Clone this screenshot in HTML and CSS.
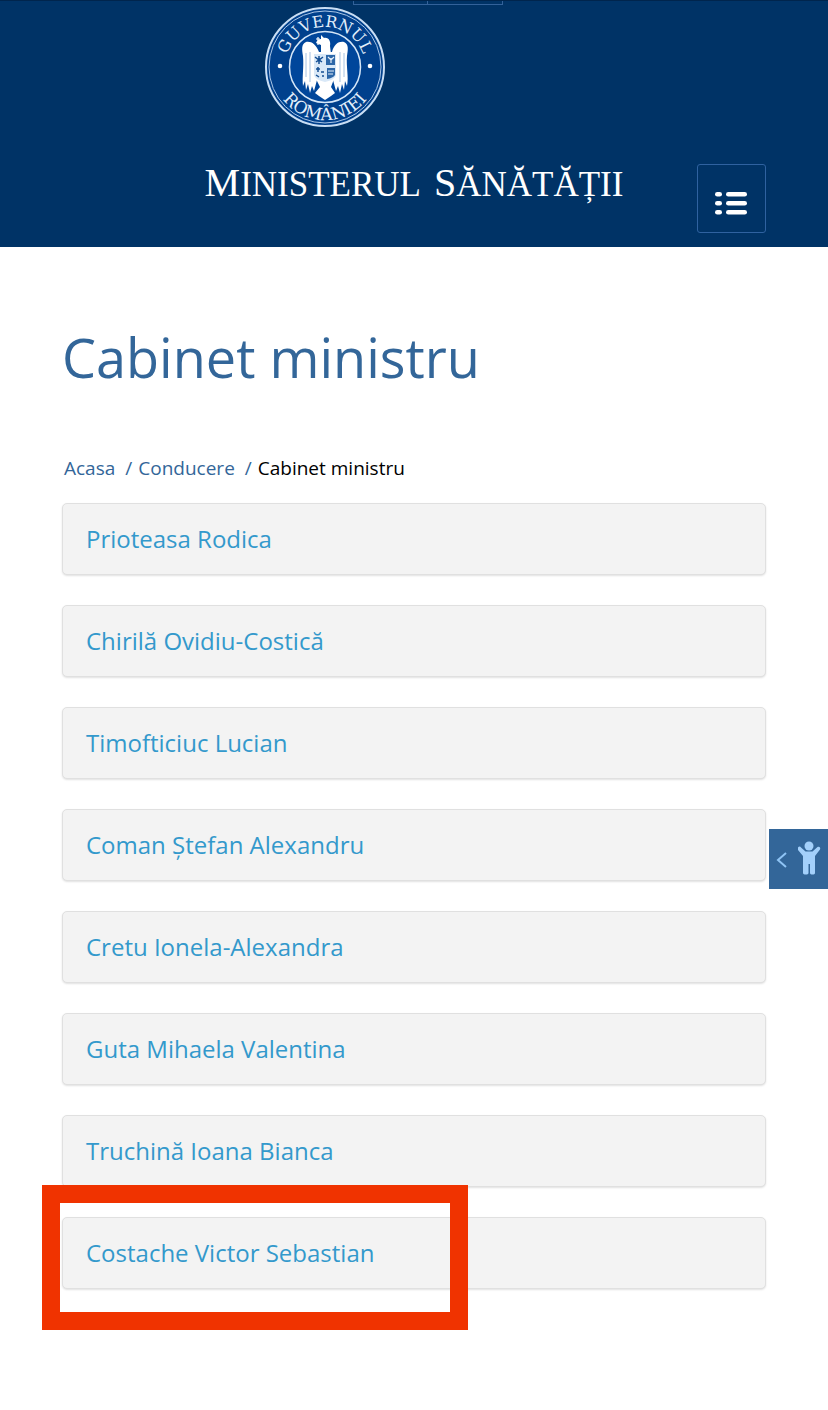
FILE: index.html
```
<!DOCTYPE html>
<html lang="ro">
    <head>
        <meta charset="utf-8">
        <meta name="viewport" content="width=device-width, initial-scale=1">
        <title>Cabinet ministru</title>
        <link rel="stylesheet" href="styles.css">
    </head>
    <body>
        <header class="header">
            <div class="lang-bar">
                <span class="lang-cell"></span>
                <span class="lang-cell"></span>
            </div>
            <div class="header-row">
                <div class="brand">
                    <svg class="logo" viewBox="0 0 120 120" role="img" aria-label="Guvernul României">
                        <defs>
                            <path id="arcTop" d="M20 60 A40 40 0 0 1 100 60"/>
                            <path id="arcBottom" d="M7 60 A53 53 0 0 0 113 60"/>
                        </defs>
                        <circle cx="60" cy="60" r="59" fill="#00408c" stroke="#c9def4" stroke-width="2"/>
                        <circle cx="60" cy="60" r="56" fill="none" stroke="#a9c5e6" stroke-width="1"/>
                        <circle cx="60" cy="60" r="35.5" fill="#00469b" stroke="#d6e7f8" stroke-width="1.5"/>
                        <text class="logo-text"><textPath href="#arcTop" startOffset="50%" text-anchor="middle">GUVERNUL</textPath></text>
                        <text class="logo-text logo-text-low"><textPath href="#arcBottom" startOffset="50%" text-anchor="middle">ROMÂNIEI</textPath></text>
                        <circle cx="15" cy="59" r="2.3" fill="#fff"/>
                        <circle cx="105" cy="59" r="2.3" fill="#fff"/>
                        <!-- eagle -->
                        <g fill="#fff">
                            <path d="M54 45 C51 37 46 34 41 35 C36 37 37 43 38 49 C39 60 37 70 38 79 L40 74 L41 83 L43 77 L45 86 L47 79 L49 84 L52 73 L68 73 L71 84 L73 79 L75 86 L77 77 L79 83 L80 74 L82 79 C84 70 81 60 82 49 C83 43 84 37 79 35 C74 34 69 37 67 45 Z"/>
                            <path d="M56 46 L56 38 L51 36 C52 33 54 32 56 32 L56 28 L59 31 C64 30 66 35 65 39 L66 47 Z"/>
                            <path d="M51 72 L69 72 L66 80 L70 86 L66 89 L60 93 L54 89 L50 86 L55 80 Z"/>
                        </g>
                        <path d="M53 30 v8 M51 32 h4" stroke="#fff" stroke-width="1.2"/>
                        <path d="M41 46 v24 M45 45 v30 M79 46 v24 M75 45 v30" stroke="#8fb3da" stroke-width=".8"/>
                        <path d="M49 47 H71 V68 Q70 73 60 75 Q50 73 49 68 Z" fill="#d9e8f7"/>
                        <path d="M61 48 H70 V58 H61 Z M62 61 H70 V68 Q68 71 62 72 Z" fill="#2d67a8"/>
                        <g fill="none" stroke="#144e93" stroke-width="1.5">
                            <path d="M50 50 L54 53 L58 50 M54 49 V57 M51 55 L54 53 L57 55"/>
                            <path d="M51 62 h4 M53 60 v5 M56 65 h3 M51 68 l3 2 M57 69 h2"/>
                        </g>
                        <path d="M63 50 l3 3 l3 -3 M66 51 v5 M63 64 h6 M63 67 h5" fill="none" stroke="#e6f0fa" stroke-width="1.2"/>
                    </svg>
                    <div class="ministry"><span>Ministerul</span> <span>Sănătății</span></div>
                </div>
                <button class="menu-btn" type="button" aria-label="Meniu">
                    <svg width="34" height="26" viewBox="0 0 34 26" fill="#fff">
                        <rect x="0" y="2" width="7" height="4.6" rx="2.3"/>
                        <rect x="11" y="2" width="21" height="4.6" rx="2.3"/>
                        <rect x="0" y="11" width="7" height="4.6" rx="2.3"/>
                        <rect x="11" y="11" width="21" height="4.6" rx="2.3"/>
                        <rect x="0" y="20" width="7" height="4.6" rx="2.3"/>
                        <rect x="11" y="20" width="21" height="4.6" rx="2.3"/>
                    </svg>
                </button>
            </div>
        </header>

        <main class="content">
            <h1 class="page-title">Cabinet ministru</h1>
            <nav class="breadcrumb">
                <a href="#">Acasa</a>
                <span class="sep">/</span>
                <a href="#">Conducere</a>
                <span class="sep">/</span>
                <span>Cabinet ministru</span>
            </nav>
            <ul class="people">
                <li class="person"><a href="#">Prioteasa Rodica</a></li>
                <li class="person"><a href="#">Chirilă Ovidiu-Costică</a></li>
                <li class="person"><a href="#">Timofticiuc Lucian</a></li>
                <li class="person"><a href="#">Coman Ștefan Alexandru</a></li>
                <li class="person"><a href="#">Cretu Ionela-Alexandra</a></li>
                <li class="person"><a href="#">Guta Mihaela Valentina</a></li>
                <li class="person"><a href="#">Truchină Ioana Bianca</a></li>
                <li class="person marked"><a href="#">Costache Victor Sebastian</a></li>
            </ul>
        </main>

        <button class="access-btn" type="button" aria-label="Accesibilitate">
            <svg width="59" height="60" viewBox="0 0 59 60">
                <path d="M17 24 L9 31 L17 38" fill="none" stroke="#8fc4f5" stroke-width="2"/>
                <g fill="#a3d0fb">
                    <circle cx="40" cy="17" r="4.5"/>
                    <path d="M29 18.5 C30 17 31.5 17.5 32 18.5 L36.5 22.5 H43.5 L48.5 18 C50 17 52 18.5 51 20.5 L46 27 V44 C46 46 41 46 41 44 V35 H39.5 V44 C39.5 46 34 46 34 44 V27 L29 21 Z"/>
                </g>
            </svg>
        </button>
    </body>
</html>
```
FILE: styles.css
```
* {
    box-sizing: border-box;
}
body {
    margin: 0;
    font-family: "Open Sans", sans-serif;
    color: #000;
    background-color: #fff;
}
a {
    text-decoration: none;
}

/* header */
.header {
    background-color: #003366;
    border-top: 1px solid #00254d;
    padding: 0 62px 14px;
}
.lang-bar {
    display: flex;
    justify-content: center;
    padding-left: 28px;
}
.lang-cell {
    width: 75px;
    height: 4px;
    border: 1px solid #33629a;
    border-top: 0;
}
.lang-cell + .lang-cell {
    border-left: 0;
}
.header-row {
    display: grid;
    grid-template-columns: 1fr auto 1fr;
    align-items: end;
    padding-top: 2px;
}
.brand {
    grid-column: 2;
    padding-bottom: 24px;
}
.logo {
    display: block;
    width: 120px;
    height: 120px;
    margin-left: 60px;
}
.logo-text {
    font-family: "DejaVu Serif", serif;
    font-size: 16px;
    fill: #e3effb;
}
.logo-text-low {
    font-size: 17px;
}
.ministry {
    display: flex;
    gap: 13px;
    margin-top: 32px;
    font-family: "Liberation Serif", serif;
    font-size: 35px;
    line-height: 48px;
    text-transform: uppercase;
    white-space: nowrap;
    color: #fff;
}
.ministry span::first-letter {
    font-size: 40px;
}
.menu-btn {
    grid-column: 3;
    justify-self: end;
    display: flex;
    align-items: center;
    justify-content: center;
    width: 69px;
    height: 69px;
    padding: 8px 0 0;
    border: 1px solid #2f62a0;
    border-radius: 3px;
    background: none;
    cursor: pointer;
}

/* page */
.content {
    padding: 72px 62px 122px;
}
.page-title {
    margin: 0 0 60px;
    font-size: 54px;
    line-height: 76px;
    font-weight: 400;
    color: #336699;
}
.breadcrumb {
    display: flex;
    gap: 6px;
    margin-bottom: 22px;
    padding-left: 2px;
    font-size: 19px;
    line-height: 26px;
}
.breadcrumb a,
.sep {
    color: #336699;
}
.sep {
    padding-left: 4px;
}
.people {
    display: flex;
    flex-direction: column;
    gap: 30px;
    margin: 0;
    padding: 0;
    list-style: none;
}
.person {
    position: relative;
    padding: 18px 23px;
    border: 1px solid #e0e0e0;
    border-radius: 5px;
    background-color: #f3f3f3;
    box-shadow: 0 1px 2px rgba(0, 0, 0, 0.12);
    font-size: 24px;
    line-height: 34px;
}
.person a {
    color: #3399cc;
}
.marked::after {
    content: "";
    position: absolute;
    box-sizing: border-box;
    top: -33px;
    left: -21px;
    width: 426px;
    height: 145px;
    border: 18px solid #f03300;
    pointer-events: none;
}

/* accessibility tab */
.access-btn {
    position: fixed;
    top: 829px;
    right: 0;
    padding: 0;
    border: 0;
    background-color: #336699;
    cursor: pointer;
}
.access-btn svg {
    display: block;
}
```
